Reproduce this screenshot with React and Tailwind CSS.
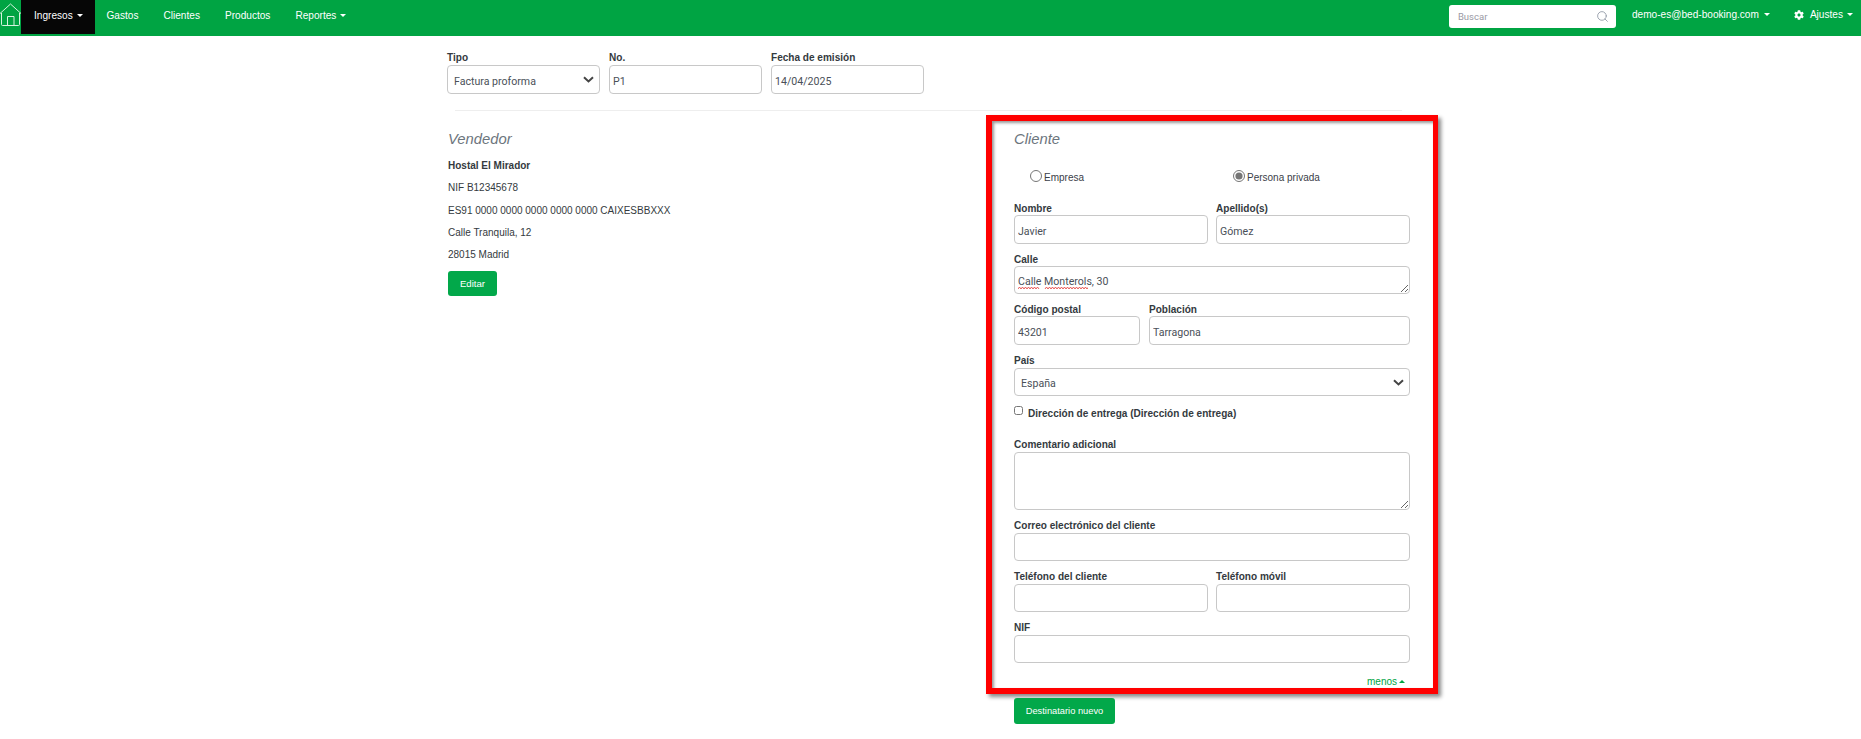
import React from "react";
import { Search } from "lucide-react";
import { FaCog } from "react-icons/fa";

const field = "block w-full box-border rounded-[4px] border border-[#c8c8c8] bg-white text-[#4a5058] outline-none [font-family:Roboto,sans-serif] text-[10.6px]";

function Caret({ up = false }) {
  return <span className={`inline-block w-0 h-0 border-x-[3px] border-x-transparent ${up ? "border-b-[3px] border-b-[#00a443]" : "border-t-[3px] border-t-white"}`} />;
}

function Chevron() {
  return (
    <svg width="11" height="7" viewBox="0 0 11 7" className="shrink-0">
      <path d="M1 1.2 L5.5 5.4 L10 1.2" fill="none" stroke="#444" strokeWidth="2" />
    </svg>
  );
}

function Label({ children, tight = false }) {
  return <label className={`block pt-[1px] text-[10.05px] leading-[12px] font-bold text-[#343a40] whitespace-nowrap ${tight ? "mb-0" : "mb-[1px]"}`}>{children}</label>;
}

function Input({ label, value = "", h = "h-[28px]", className = "", tight = false }) {
  return (
    <div className={className}>
      <Label tight={tight}>{label}</Label>
      <input readOnly value={value} className={`${field} ${h} px-[3px] pt-[4px]`} />
    </div>
  );
}

function SelectBox({ label, value, h = "h-[29px]" }) {
  return (
    <div>
      <Label>{label}</Label>
      <div className={`${field} ${h} pl-[6px] pr-[5px] flex items-center justify-between`}>
        <span className="mt-[4px]">{value}</span>
        <Chevron />
      </div>
    </div>
  );
}

function NavLink({ children, caret }) {
  return (
    <a className="flex items-center gap-[4px] px-[12.5px] pb-[3px] h-[34px] text-white text-[10.1px]">
      {children}
      {caret && <Caret />}
    </a>
  );
}

function Home() {
  return (
    <svg width="21" height="23" viewBox="0 0 21 23" className="mt-[3px] shrink-0" fill="none" stroke="#d5f2de" strokeWidth="1">
      <path d="M0 10.5 L10.5 1 L21 10.5" />
      <path d="M1.5 10 V21.5 Q1.5 22.5 2.5 22.5 H18.5 Q19.5 22.5 19.5 21.5 V10" />
      <path d="M7.5 22.5 V13.5 H14 V22.5" />
    </svg>
  );
}

export default function App() {
  return (
    <div className="[font-family:Liberation_Sans,Arial,sans-serif] bg-white min-h-[739px] text-[#343a40]">
      <nav className="h-[36px] bg-[#00a443] flex items-start">
        <Home />
        <a className="flex items-center gap-[4px] pl-[13px] pr-[13px] pb-[3px] h-[34px] w-[74px] bg-[#060606] text-white text-[10.1px]">
          Ingresos <Caret />
        </a>
        <div className="flex -ml-[1px]">
          <NavLink>Gastos</NavLink>
          <NavLink>Clientes</NavLink>
          <NavLink>Productos</NavLink>
          <NavLink caret>Reportes</NavLink>
        </div>
        <div className="ml-auto flex items-start">
          <div className="mt-[5px] w-[167px] h-[23px] bg-white rounded-[3px] flex items-center justify-between pl-[9px] pr-[7px] text-[9.5px] text-[#9a9aa5] [font-family:Roboto,sans-serif]">
            <span className="mt-[2px]">Buscar</span>
            <Search size={13} strokeWidth={1.5} className="text-[#8a93a0]" />
          </div>
          <a className="ml-[16px] flex items-center gap-[5px] h-[29px] text-white text-[10.1px]">
            demo-es@bed-booking.com <Caret />
          </a>
          <a className="ml-[24px] mr-[8px] flex items-center gap-[4px] h-[29px] text-white text-[10.1px]">
            <FaCog size={10} className="mr-[2px]" /> Ajustes <Caret />
          </a>
        </div>
      </nav>

      <main className="pl-[447px] pt-[15px]">
        <div className="flex gap-[9px]">
          <div className="w-[153px]"><SelectBox label="Tipo" value="Factura proforma" /></div>
          <Input className="w-[153px]" label="No." value="P1" h="h-[29px]" />
          <Input className="w-[153px]" label="Fecha de emisión" value="14/04/2025" h="h-[29px]" />
        </div>
        <hr className="mt-[16px] ml-[8px] w-[947px] border-t border-[#eeeeee]" />

        <div className="flex items-start">
          <section className="w-[539px] pl-[1px] pt-[19px]">
            <h2 className="text-[14.8px] leading-[18px] italic text-[#6c757d]">Vendedor</h2>
            <div className="mt-[12px] text-[10px] leading-[12px]">
              <p className="font-bold mb-[10.25px]">Hostal El Mirador</p>
              <p className="mb-[10.25px]">NIF B12345678</p>
              <p className="mb-[10.25px]">ES91 0000 0000 0000 0000 0000 CAIXESBBXXX</p>
              <p className="mb-[10.25px]">Calle Tranquila, 12</p>
              <p>28015 Madrid</p>
            </div>
            <button className="mt-[10px] w-[49px] h-[25px] pt-[1px] rounded-[3px] bg-[#02a84a] text-white text-[9.6px]">Editar</button>
          </section>

          <div className="mt-[4px]">
            <section className="w-[452px] box-border border-[6px] border-r-[5px] border-[#ff0000] pl-[22px] pr-[23px] pt-[9px] pb-[1px] shadow-[3px_3px_4px_#888888,inset_2px_2px_3px_#999999]">
              <h2 className="text-[14.8px] leading-[18px] italic text-[#6c757d]">Cliente</h2>

              <div className="mt-[21px] pl-[16px] flex h-[14px] text-[10px] text-[#3a4048]">
                <label className="w-[203px] flex items-center gap-[2px]">
                  <input type="radio" name="tipo" className="m-0 w-[12px] h-[12px] accent-[#757575]" />
                  <span className="mt-[3px]">Empresa</span>
                </label>
                <label className="flex items-center gap-[2px]">
                  <input type="radio" name="tipo" defaultChecked className="m-0 w-[12px] h-[12px] accent-[#757575]" />
                  <span className="mt-[3px]">Persona privada</span>
                </label>
              </div>

              <div className="mt-[19px] grid grid-cols-2 gap-x-[8px]">
                <Input tight label="Nombre" value="Javier" h="h-[29px]" />
                <Input tight label="Apellido(s)" value="Gómez" h="h-[29px]" />
              </div>

              <div className="mt-[9px] relative">
                <Label tight>Calle</Label>
                <textarea readOnly rows={1} defaultValue="Calle Monterols, 30" className={`${field} h-[28px] px-[3px] pt-[7px] pb-[3px] leading-[16px] resize-y overflow-hidden`} />
                <svg width="70" height="4" viewBox="0 0 70 4" className="absolute left-[4px] top-[33px]" fill="none" stroke="#e53935" strokeWidth="0.8">
                  <path d="M0 3 l1.5 -2 l1.5 2 l1.5 -2 l1.5 2 l1.5 -2 l1.5 2 l1.5 -2 l1.5 2 l1.5 -2 l1.5 2 l1.5 -2 l1.5 2 l1.5 -2 l1.5 2 M27 3 l1.5 -2 l1.5 2 l1.5 -2 l1.5 2 l1.5 -2 l1.5 2 l1.5 -2 l1.5 2 l1.5 -2 l1.5 2 l1.5 -2 l1.5 2 l1.5 -2 l1.5 2 l1.5 -2 l1.5 2 l1.5 -2 l1.5 2 l1.5 -2 l1.5 2 l1.5 -2 l1.5 2 l1.5 -2 l1.5 2 l1.5 -2 l1.5 2 l1.5 -2 l1.5 2 l1.5 -2 l1.5 2" />
                </svg>
              </div>

              <div className="mt-[9px] flex gap-[9px]">
                <Input tight className="w-[126px]" label="Código postal" value="43201" h="h-[29px]" />
                <Input tight className="flex-1" label="Población" value="Tarragona" h="h-[29px]" />
              </div>

              <div className="mt-[9px]">
                <SelectBox label="País" value="España" h="h-[28px]" />
              </div>

              <label className="mt-[11px] flex items-start gap-[5px] h-[12px] text-[10.05px] leading-[12px] font-bold text-[#343a40]">
                <input type="checkbox" className="m-0 -mt-[1px] w-[9px] h-[9px]" />
                <span className="mt-[1px]">Dirección de entrega (Dirección de entrega)</span>
              </label>

              <div className="mt-[19px]">
                <Label>Comentario adicional</Label>
                <textarea readOnly className={`${field} h-[58px] p-[3px] resize-y`} />
              </div>

              <Input className="mt-[9px]" label="Correo electrónico del cliente" />

              <div className="mt-[9px] grid grid-cols-2 gap-x-[8px]">
                <Input label="Teléfono del cliente" />
                <Input label="Teléfono móvil" />
              </div>

              <Input className="mt-[9px]" label="NIF" />

              <div className="mt-[12px] pr-[5px] h-[12px] flex items-center justify-end gap-[2px] text-[10px] text-[#00a443]">
                menos <Caret up />
              </div>
            </section>
            <button className="ml-[28px] mt-[4px] w-[101px] h-[26px] pt-[2px] rounded-[3px] bg-[#02a84a] text-white text-[9.3px]">Destinatario nuevo</button>
          </div>
        </div>
      </main>
    </div>
  );
}
